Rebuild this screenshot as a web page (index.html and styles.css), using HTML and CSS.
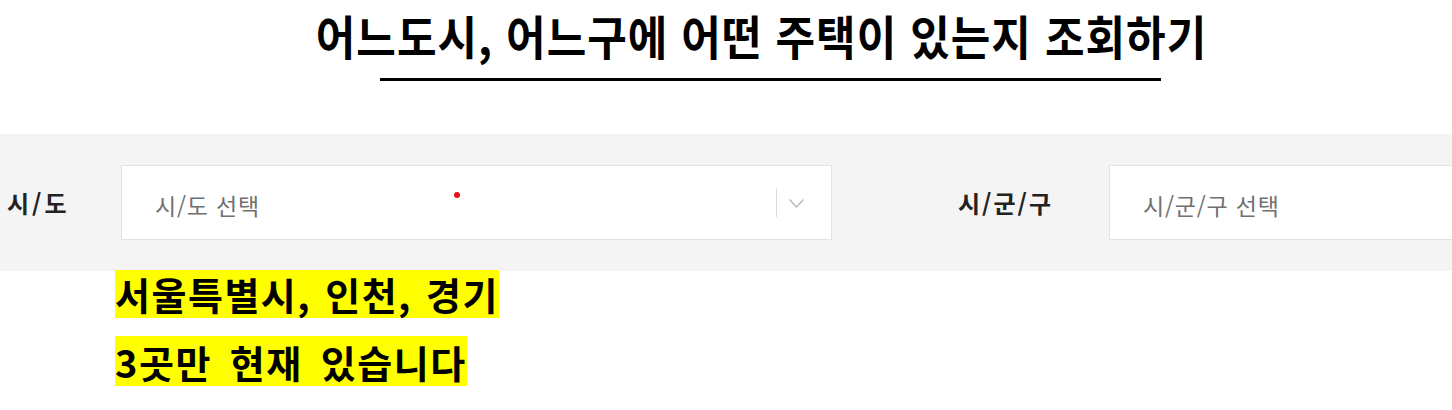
FILE: index.html
```html
<!DOCTYPE html>
<html lang="ko">
<head>
<meta charset="utf-8">
<title>주택 조회</title>
<link rel="stylesheet" href="styles.css">
</head>
<body>
<header class="header">
  <h1 class="title">어느도시, 어느구에 어떤 주택이 있는지 조회하기</h1>
  <div class="rule"></div>
</header>

<section class="search-bar">
  <label class="field-label label-sido">시/도</label>
  <div class="select select-sido">
    <span class="placeholder">시/도 선택</span>
    <span class="required-dot"></span>
    <span class="indicators">
      <span class="sep"></span>
      <svg class="chevron" width="15" height="9" viewBox="0 0 15 9"><path d="M0.5 0.5 L7.5 8 L14.5 0.5" fill="none" stroke="#b3b3b3" stroke-width="1.2"/></svg>
    </span>
  </div>
  <label class="field-label label-sigungu">시/군/구</label>
  <div class="select select-sigungu">
    <span class="placeholder">시/군/구 선택</span>
  </div>
</section>

<section class="note">
  <div class="note-line"><span class="hl">서울특별시,</span><span class="hl gap">인천,</span><span class="hl gap">경기</span></div>
  <div class="note-line line2"><span class="hl">3곳만</span><span class="hl gap">현재</span><span class="hl gap">있습니다</span></div>
</section>
</body>
</html>
```

FILE: styles.css
```css
html, body {
  margin: 0;
  padding: 0;
  background: #ffffff;
  overflow: hidden;
}
body {
  width: 1452px;
  height: 410px;
  font-family: "Noto Sans CJK KR", "Noto Sans", sans-serif;
  color: #000;
}

.header {
  display: flex;
  flex-direction: column;
  align-items: center;
  padding-top: 14px;
  padding-left: 71px;
}
.title {
  margin: 0;
  font-size: 43px;
  line-height: 40px;
  font-weight: 700;
  letter-spacing: 1px;
  white-space: nowrap;
  transform: scaleY(1.08);
}
.rule {
  width: 781px;
  height: 3px;
  background: #000;
  margin-top: 24px;
  margin-left: 18px;
}

.search-bar {
  margin-top: 53px;
  height: 137px;
  background: #f4f4f4;
  display: flex;
  align-items: center;
  padding-left: 7px;
  overflow: hidden;
}
.field-label {
  font-size: 24px;
  font-weight: 700;
  color: #222;
  letter-spacing: 2px;
  white-space: nowrap;
}
.label-sido {
  width: 114px;
  flex: none;
  letter-spacing: 3px;
}
.label-sigungu {
  margin-left: 126px;
  width: 151px;
  flex: none;
}
.select {
  position: relative;
  flex: none;
  height: 73px;
  background: #fff;
  border: 1px solid #e3e3e3;
  display: flex;
  align-items: center;
  padding-left: 33px;
  box-sizing: content-box;
}
.select-sido { width: 676px; }
.select-sigungu { width: 676px; }
.placeholder {
  font-size: 23px;
  color: #707070;
  letter-spacing: 0.8px;
  white-space: nowrap;
  margin-top: 4px;
}
.required-dot {
  position: absolute;
  left: 332px;
  top: 26px;
  width: 6px;
  height: 6px;
  border-radius: 50%;
  background: #e8101a;
}
.indicators {
  margin-left: auto;
  display: flex;
  align-items: center;
  padding-right: 27px;
}
.sep {
  width: 1px;
  height: 29px;
  background: #dcdcdc;
  margin-right: 12px;
}
.chevron {
  display: block;
  margin-top: 1px;
}

.note {
  padding-left: 115px;
  margin-top: -1px;
}
.note-line {
  display: flex;
  height: 48px;
}
.line2 {
  margin-top: 18px;
  height: 50px;
}
.hl {
  display: inline-block;
  background: #ffff00;
  font-size: 38px;
  font-weight: 700;
  line-height: 48px;
  height: 100%;
  letter-spacing: 1.5px;
  white-space: nowrap;
}
.line2 .hl {
  line-height: 52px;
}
.hl.gap {
  padding-left: 14px;
}
.line2 .hl.gap {
  padding-left: 18px;
}
```
